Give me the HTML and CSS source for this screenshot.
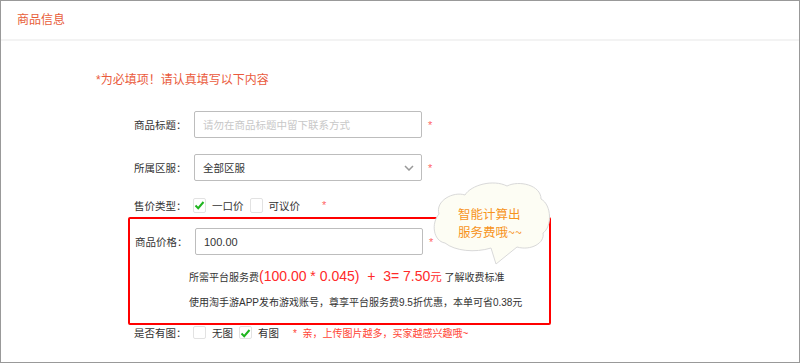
FILE: index.html
```html
<!DOCTYPE html>
<html lang="zh-CN">
<head>
    <meta charset="UTF-8">
    <title>商品信息</title>
    <link rel="stylesheet" href="styles.css">
</head>
<body>
    <div class="panel">
        <div class="panel-head">商品信息</div>
        <div class="panel-body">
            <p class="notice">*为必填项！请认真填写以下内容</p>

            <div class="row row-field">
                <span class="row-label">商品标题：</span>
                <div class="text-box placeholder">请勿在商品标题中留下联系方式</div>
                <span class="req">*</span>
            </div>

            <div class="row row-field">
                <span class="row-label">所属区服：</span>
                <div class="text-box select-box">
                    <span>全部区服</span>
                    <svg class="chevron" width="10" height="6" viewBox="0 0 10 6">
                        <path d="M1 1 L5 5 L9 1" fill="none" stroke="#999" stroke-width="1.5"/>
                    </svg>
                </div>
                <span class="req">*</span>
            </div>

            <div class="row row-check">
                <span class="row-label">售价类型：</span>
                <span class="check checked"><svg width="13" height="15" viewBox="0 0 13 15"><path d="M2.5 7.5 L5.2 10.2 L10.5 4" fill="none" stroke="#1fb51f" stroke-width="2"/></svg></span>
                <span class="check-text">一口价</span>
                <span class="check"></span>
                <span class="check-text">可议价</span>
                <span class="req req-wide">*</span>
            </div>

            <div class="price-box">
                <div class="row row-field">
                    <span class="row-label">商品价格：</span>
                    <div class="text-box value">100.00</div>
                    <span class="req">*</span>
                </div>
                <p class="fee">所需平台服务费<span class="fee-num">(100.00 * 0.045) &nbsp;+&nbsp; 3= 7.50</span><span class="fee-unit">元</span> 了解收费标准</p>
                <p class="tip">使用淘手游APP发布游戏账号，尊享平台服务费9.5折优惠，本单可省0.38元</p>
            </div>

            <div class="row row-check row-last">
                <span class="row-label">是否有图：</span>
                <span class="check"></span>
                <span class="check-text">无图</span>
                <span class="check checked"><svg width="13" height="15" viewBox="0 0 13 15"><path d="M2.5 7.5 L5.2 10.2 L10.5 4" fill="none" stroke="#1fb51f" stroke-width="2"/></svg></span>
                <span class="check-text">有图</span>
                <span class="hint">*&nbsp; 亲，上传图片越多，买家越感兴趣哦~</span>
            </div>

            <svg class="bubble" width="124" height="90" viewBox="-2 -2 124 90">
                <path d="M14 62 C2 60 0 42 8 33 C4 20 22 10 34 14 C40 4 62 -2 76 5 C88 -1 110 4 110 18 C121 24 121 46 112 52 C114 62 100 70 86 66 L65 83 L60 67 C44 72 24 70 14 62 Z" fill="#fdfdf4" stroke="#d9d9d9" stroke-width="1"/>
                <text class="bubble-text" x="27" y="38">智能计算出</text>
                <text class="bubble-text" x="27" y="56">服务费哦~~</text>
            </svg>
        </div>
    </div>
</body>
</html>
```

FILE: styles.css
```css
body {
    margin: 0;
    font-family: "Liberation Sans", "Noto Sans CJK SC", sans-serif;
    background: #fff;
}
.panel {
    width: 800px;
    height: 363px;
    box-sizing: border-box;
    border: 1px solid #999;
    overflow: hidden;
}
.panel-head {
    height: 38px;
    line-height: 38px;
    padding-left: 16px;
    font-size: 12px;
    color: #e85d3a;
    border-bottom: 2px solid #f3f3f3;
}
.panel-body {
    position: relative;
    padding: 31px 0 0 133px;
}
.notice {
    margin: 0 0 0 -38px;
    line-height: 16px;
    font-size: 12px;
    color: #ea5a3c;
}
.row {
    display: flex;
    align-items: center;
    font-size: 10.5px;
    color: #333;
}
.row-label {
    width: 60px;
    flex: none;
}
.row-field {
    height: 27px;
    margin-top: 16px;
}
.notice + .row-field {
    margin-top: 23px;
}
.text-box {
    width: 228px;
    height: 27px;
    box-sizing: border-box;
    border: 1px solid #bdbdbd;
    border-radius: 2px;
    padding-left: 8px;
    display: flex;
    align-items: center;
    font-size: 10.5px;
    color: #333;
}
.placeholder {
    color: #c8c8c8;
}
.value {
    font-size: 11px;
}
.select-box {
    justify-content: space-between;
    padding-right: 7px;
}
.chevron {
    display: block;
}
.req {
    margin-left: 6px;
    font-size: 11px;
    color: #f66;
}
.req-wide {
    margin-left: 15px;
}
.row-check {
    height: 16px;
    margin-top: 16px;
}
.check {
    width: 13px;
    height: 15px;
    box-sizing: border-box;
    border: 1px solid #e2e2e2;
    border-radius: 2px;
    background: #fff;
    flex: none;
    margin-left: -1px;
}
.check svg {
    display: block;
    margin: -1px 0 0 -1px;
}
.check-text {
    margin: 0 7px 0 6px;
}
.price-box {
    width: 423px;
    box-sizing: border-box;
    margin: 4px 0 0 -6px;
    padding: 9px 0 12px 5px;
    border: 2px solid #f00;
    border-radius: 2px;
}
.price-box .row-field {
    margin-top: 0;
}
.fee {
    margin: 11px 0 0 54px;
    line-height: 20px;
    font-size: 10px;
    color: #333;
}
.fee-num {
    font-size: 14px;
    color: #ff2a2a;
}
.fee-unit {
    font-size: 11.5px;
    color: #ff2a2a;
}
.tip {
    margin: 7px 0 0 54px;
    line-height: 16px;
    font-size: 10px;
    color: #333;
}
.row-last {
    height: 14px;
    margin-top: 0;
}
.row-last .check {
    height: 13px;
}
.hint {
    margin-left: 7px;
    font-size: 10px;
    color: #f43;
}
.bubble {
    position: absolute;
    left: 428px;
    top: 138px;
}
.bubble-text {
    font-family: "Noto Sans CJK SC", sans-serif;
    font-size: 12.5px;
    fill: #f7941d;
}
```
